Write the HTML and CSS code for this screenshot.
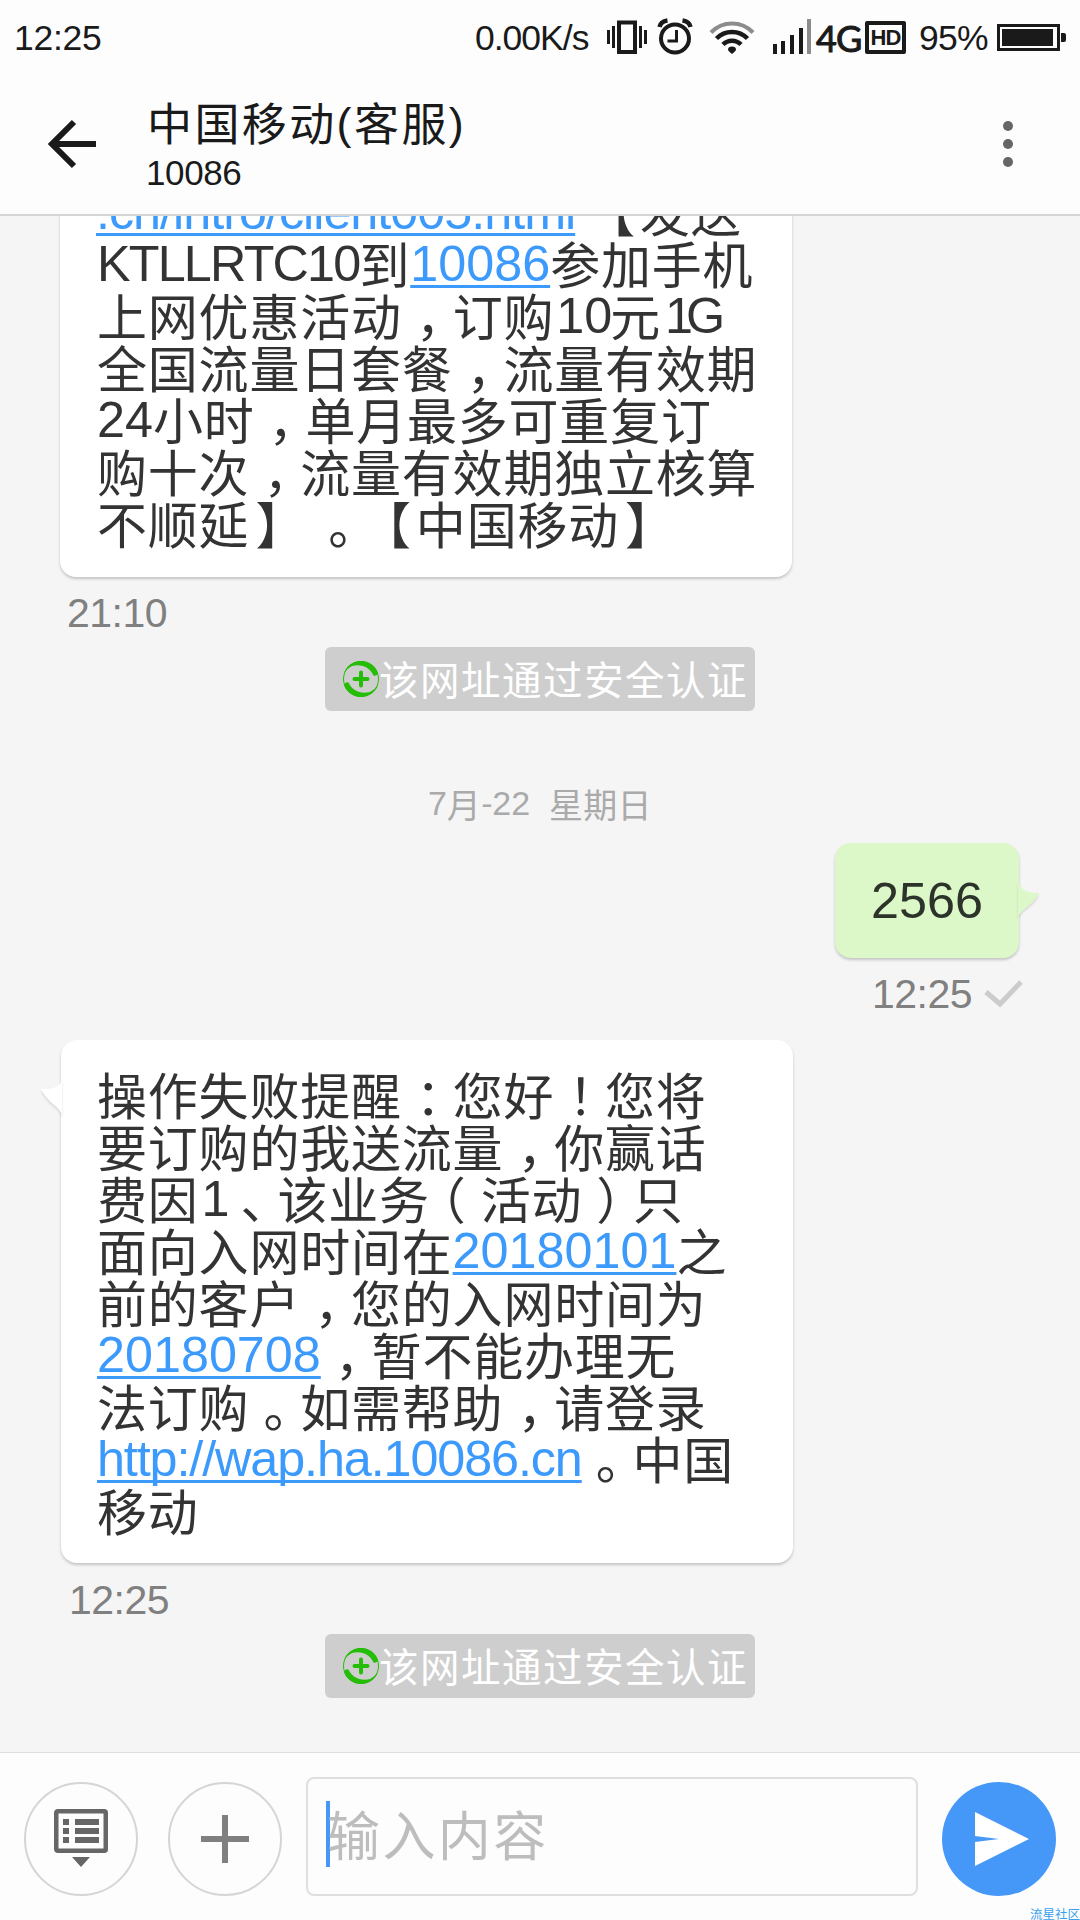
FILE: index.html
```html
<!DOCTYPE html>
<html lang="zh-CN">
<head>
<meta charset="utf-8">
<title>中国移动(客服)</title>
<link rel="stylesheet" href="styles.css">
</head>
<body>
<div class="phone">
  <div class="status">
    <span class="clock">12:25</span>
    <span class="speed">0.00K/s</span>
    <svg class="sys-icons" width="205" height="40" viewBox="607 17 205 40" fill="none" stroke="#1a1a1a">
      <g fill="#1a1a1a" stroke="none">
        <path d="M607 30h3v14h-3zM612 26h3v22h-3zM639 26h3v22h-3zM644 30h3v14h-3z"/>
        <path d="M773 44h4v10h-4zM781 41h4v13h-4zM790 35h4v19h-4zM799 28h4v26h-4z"/>
        <path d="M732 46.500c2.500 0 4 1.300 4 3 0 1.500-2.500 3-4 4.500-1.500-1.500-4-3-4-4.500 0-1.700 1.500-3 4-3z"/>
      </g>
      <path d="M807 19h4v35h-4z" fill="#8c8c8c" stroke="none"/>
      <rect x="619" y="22.500" width="16" height="29.500" stroke-width="4"/>
      <circle cx="675" cy="38.500" r="14" stroke-width="4"/>
      <path d="M676.500 30v11h-9" stroke-width="3"/>
      <path d="M659.500 27q1-5.500 8-6.500M690.500 27q-1-5.500-8-6.500" stroke-width="4.500"/>
      <path d="M711 32.500a29 29 0 0 1 42 0" stroke="#8c8c8c" stroke-width="4"/>
      <path d="M716.500 38.500a21.500 21.500 0 0 1 31 0M723 44.500a12.500 12.500 0 0 1 18 0" stroke-width="4.500"/>
    </svg>
    <span class="net">4G</span>
    <span class="hd">HD</span>
    <span class="percent">95%</span>
    <svg class="battery" width="71" height="28" viewBox="0 0 71 28">
      <rect x="1.500" y="1.500" width="60" height="24" fill="none" stroke="#1a1a1a" stroke-width="3"/>
      <path d="M5 5h51v17H5zM64 9h3q2 0 2 2v5q0 2-2 2h-3z" fill="#1a1a1a"/>
    </svg>
  </div>
  <div class="header">
    <svg class="back" width="50" height="50" viewBox="0 0 50 50" fill="none" stroke="#1a1a1a" stroke-width="6">
      <path d="M26 3 4 25l22 22M4 25h44"/>
    </svg>
    <div class="contact">
      <div class="name">中国移动<span class="paren">(</span>客服<span class="paren">)</span></div>
      <div class="number">10086</div>
    </div>
    <svg class="more" width="10" height="48" viewBox="0 0 10 48" fill="#666">
      <circle cx="5" cy="6" r="5"/><circle cx="5" cy="24" r="5"/><circle cx="5" cy="42" r="5"/>
    </svg>
  </div>

  <div class="thread">
    <div class="bubble in first">
      <div class="line"><a class="n url1">.cn/intro/client005.html</a><span class="sp"></span><span class="open">【</span>发送</div>
      <div class="line"><span class="n code">KTLLRTC10</span>到<a class="n">10086</a>参加手机</div>
      <div class="line">上网优惠活动<span class="c">，</span>订购<span class="n ten">10</span>元<span class="n gig">1G</span></div>
      <div class="line">全国流量日套餐<span class="c">，</span>流量有效期</div>
      <div class="line"><span class="n">24</span>小时<span class="c">，</span>单月最多可重复订</div>
      <div class="line">购十次<span class="c">，</span>流量有效期独立核算</div>
      <div class="line">不顺延<span class="close">】</span><span class="sp"></span><span class="c">。</span><span class="open">【</span>中国移动<span class="close">】</span></div>
    </div>
    <div class="time t1">21:10</div>
    <div class="chip">
      <svg width="36" height="36" viewBox="0 0 36 36" fill="none" stroke="#25bd08">
        <circle cx="18" cy="18" r="17.500" stroke-width="1"/>
        <path d="M1 12A18 18 0 0 1 35 12Q34 15.500 30.500 14.500C27 7 19 2.500 9 5Q4 7.500 1 12zM35 24A18 18 0 0 1 1 24Q2 20.500 5.500 21.500C9 29 17 33.500 27 31Q32 28.500 35 24z" fill="#25bd08" stroke="none"/>
        <path d="M18 11.500v13M11.500 18h13" stroke-width="4" stroke-linecap="round"/>
      </svg>
      <span>该网址通过安全认证</span>
    </div>
    <div class="date"><span class="d">7</span>月<span class="d">-22</span><span class="gap"></span>星期日</div>
    <div class="bubble out">
      <div class="line"><span class="n">2566</span></div>
      <svg class="tail-out" width="22" height="42" viewBox="0 0 22 42"><path d="M0 0Q1 13 21 13Q18 20 8 28Q1 33 0 38z" fill="#dcf8c8"/></svg>
    </div>
    <div class="sent">
      <span class="time">12:25</span>
      <svg width="40" height="28" viewBox="0 0 40 28" fill="none" stroke="#ccc" stroke-width="5"><path d="M2 12l14 12L37 2"/></svg>
    </div>
    <div class="bubble in second">
      <svg class="tail-in" width="22" height="42" viewBox="0 0 22 42"><path d="M22 0Q21 12 1 11Q3 17 14 27Q21 32 22 38z" fill="#fff"/></svg>
      <div class="line">操作失败提醒<span class="c">：</span>您好<span class="c">！</span>您将</div>
      <div class="line">要订购的我送流量<span class="c">，</span>你赢话</div>
      <div class="line">费因<span class="n one">1</span><span class="c">、</span>该业务<span class="po">（</span>活动<span class="pc">）</span>只</div>
      <div class="line">面向入网时间在<a class="n">20180101</a>之</div>
      <div class="line">前的客户<span class="c">，</span>您的入网时间为</div>
      <div class="line"><a class="n">20180708</a><span class="c">，</span>暂不能办理无</div>
      <div class="line">法订购<span class="c">。</span>如需帮助<span class="c">，</span>请登录</div>
      <div class="line"><a class="n url2">http://wap.ha.10086.cn</a><span class="c">。</span>中国</div>
      <div class="line">移动</div>
    </div>
    <div class="time t2">12:25</div>
    <div class="chip last">
      <svg width="36" height="36" viewBox="0 0 36 36" fill="none" stroke="#25bd08">
        <circle cx="18" cy="18" r="17.500" stroke-width="1"/>
        <path d="M1 12A18 18 0 0 1 35 12Q34 15.500 30.500 14.500C27 7 19 2.500 9 5Q4 7.500 1 12zM35 24A18 18 0 0 1 1 24Q2 20.500 5.500 21.500C9 29 17 33.500 27 31Q32 28.500 35 24z" fill="#25bd08" stroke="none"/>
        <path d="M18 11.500v13M11.500 18h13" stroke-width="4" stroke-linecap="round"/>
      </svg>
      <span>该网址通过安全认证</span>
    </div>
  </div>

  <div class="composer">
    <div class="round">
      <svg width="54" height="58" viewBox="0 0 54 58" fill="#666">
        <rect x="2.250" y="2.250" width="49.500" height="39.500" rx="1.500" fill="none" stroke="#666" stroke-width="4.500"/>
        <path d="M9 10h6v6H9zM21 10h24v6H21zM9 19h6v6H9zM21 19h24v6H21zM9 28h6v6H9zM21 28h24v6H21zM18 48h18l-9 10z"/>
      </svg>
    </div>
    <div class="round plus">
      <svg width="48" height="48" viewBox="0 0 48 48" fill="#808080"><path d="M21 0h6v21h21v6H27v21h-6V27H0v-6h21z"/></svg>
    </div>
    <div class="field"><span class="caret"></span><span class="hint">输入内容</span></div>
    <div class="send">
      <svg width="54" height="54" viewBox="0 0 54 54" fill="#fff"><path d="M0 0l54 27L0 54V30l24-3L0 24z"/></svg>
    </div>
    <div class="mark">流星社区</div>
  </div>
</div>
</body>
</html>
```
FILE: styles.css
```css
* { box-sizing: border-box; }
body { margin: 0; font-family: "Liberation Sans", "Noto Sans CJK SC", sans-serif; color: #1a1a1a; text-spacing-trim: space-all; }
svg { display: block; flex: none; }
.phone { width: 1080px; height: 1920px; display: flex; flex-direction: column; background: #f5f5f5; overflow: hidden; }

.status { flex: none; height: 76px; display: flex; align-items: center; background: #fdfdfd; font-size: 35.500px; white-space: nowrap; padding: 0 11px 0 14px; line-height: 76px; }
.clock { width: 461px; letter-spacing: -.3px; }
.speed { width: 132px; letter-spacing: -1px; }
.sys-icons { margin-top: -2px; }
.net { font: 400 36px/76px Lato, sans-serif; width: 53px; padding-left: 4px; letter-spacing: -1px; -webkit-text-stroke: 1px #1a1a1a; }
.hd { width: 41px; height: 33px; border: 4px solid #1a1a1a; border-radius: 2px; font-weight: 700; font-size: 22px; line-height: 26px; text-align: center; letter-spacing: -1px; margin-top: -1px; }
.percent { width: 79px; margin-left: 13px; letter-spacing: -.8px; }
.battery { margin-left: -1px; }

.header { flex: none; height: 140px; display: flex; background: #fdfdfd; border-bottom: 2px solid #d5d5d5; padding: 0 67px 0 48px; }
.back { margin-top: 43px; }
.contact { flex: 1; padding: 16px 0 0 49px; }
.name { font: 400 45px/60px "Noto Sans CJK SC", sans-serif; letter-spacing: 2.400px; white-space: nowrap; }
.paren { font-family: "Liberation Sans", sans-serif; line-height: 0; vertical-align: 2px; }
.number { font-size: 35px; line-height: 36px; letter-spacing: -.4px; margin: 3px 0 0 -1px; }
.more { margin-top: 44px; }

.thread { flex: 1; min-height: 0; overflow: hidden; display: flex; flex-direction: column; justify-content: flex-end; padding-bottom: 54px; }
.bubble { flex: none; position: relative; border-radius: 16px; font: 400 50px/52px "Noto Sans CJK SC", sans-serif; color: #333; box-shadow: 0 2px 3px rgba(0,0,0,.2); }
.in { width: 732px; margin-left: 61px; padding: 27px 0 28px 36px; background: #fff; }
.first { margin-left: 60px; padding-left: 37px; padding-bottom: 29px; }
.line { height: 52px; white-space: nowrap; letter-spacing: .8px; }
.n { font-family: "Liberation Sans", sans-serif; font-size: 50.300px; line-height: 0; vertical-align: 3px; letter-spacing: 0; }
a.n { color: #3c9afc; text-decoration: underline 3px; text-underline-offset: 4px; text-decoration-skip-ink: none; }
.code { letter-spacing: -1.800px; }
.ten { margin-left: 2px; margin-right: -2px; }
.gig { margin-left: 4px; letter-spacing: -7px; }
.one { margin-left: 3px; margin-right: -3px; }
.url1 { margin-left: -1px; letter-spacing: -1px; }
.url2 { letter-spacing: -1.100px; }
.sp { display: inline-block; width: 14px; }
.c { margin-left: 14px; margin-right: -14px; }
.open { margin-left: -4px; margin-right: 4px; }
.close { margin-left: 6px; margin-right: -6px; }
.po { margin-left: -14px; margin-right: 14px; }
.pc { margin-left: 14px; margin-right: -14px; }

.time { flex: none; font-size: 41px; line-height: 46px; color: #808080; letter-spacing: -.5px; }
.t1 { margin: 13px 0 0 67px; height: 57px; }
.t2 { margin: 14px 0 0 69px; height: 57px; }
.chip { flex: none; width: 430px; height: 64px; margin-left: 325px; padding-left: 18px; display: flex; align-items: center; gap: 0; background: #cecece; border-radius: 6px; color: #fff; font: 400 39.500px/60px "Noto Sans CJK SC", sans-serif; letter-spacing: 1.500px; white-space: nowrap; }
.chip span { margin-top: -2px; }
.date { flex: none; height: 50px; margin: 68px 0 0 428px; font: 400 34px/50px "Noto Sans CJK SC", sans-serif; letter-spacing: .3px; color: #aaa; white-space: nowrap; }
.d { font-family: "Liberation Sans", sans-serif; line-height: 0; vertical-align: 3px; letter-spacing: -.1px; }
.gap { display: inline-block; width: 19px; }
.out { width: 184px; height: 115px; margin: 14px 0 0 835px; padding: 30px 0 0 36px; background: #dcf8c8; color: #2c332a; }
.tail-out { position: absolute; left: 183px; top: 37px; filter: drop-shadow(0 2px 1px rgba(0,0,0,.12)); }
.tail-in { position: absolute; left: -21px; top: 38px; filter: drop-shadow(0 2px 1px rgba(0,0,0,.12)); }
.sent { flex: none; display: flex; align-items: flex-start; height: 82px; padding: 13px 0 0 872px; }
.sent svg { margin: 9px 0 0 12px; }

.composer { flex: none; height: 168px; position: relative; display: flex; background: #fdfdfd; border-top: 1px solid #ddd; padding: 24px 24px 0; }
.round, .send { flex: none; width: 114px; height: 114px; margin-top: 5px; border-radius: 50%; display: flex; align-items: center; justify-content: center; }
.round { border: 2px solid #d5d5d5; }
.round:not(.plus) svg { margin-top: -2px; }
.plus { margin-left: 30px; }
.field { width: 612px; height: 119px; margin: 0 24px; border: 2px solid #dfdfdf; border-radius: 8px; padding-left: 18px; display: flex; align-items: center; }
.caret { width: 4px; height: 66px; margin-top: -6px; background: #4598f8; }
.hint { margin: -7px 0 0 -3px; font: 400 53px/80px "Noto Sans CJK SC", sans-serif; letter-spacing: 2.400px; color: #bdbdbd; }
.send { background: #4598f8; }
.send svg { margin-left: 6px; }
.mark { position: absolute; right: 0; bottom: -2px; font: 400 12.500px/16px "Noto Sans CJK SC", sans-serif; color: #3aa0f0; white-space: nowrap; }
```
